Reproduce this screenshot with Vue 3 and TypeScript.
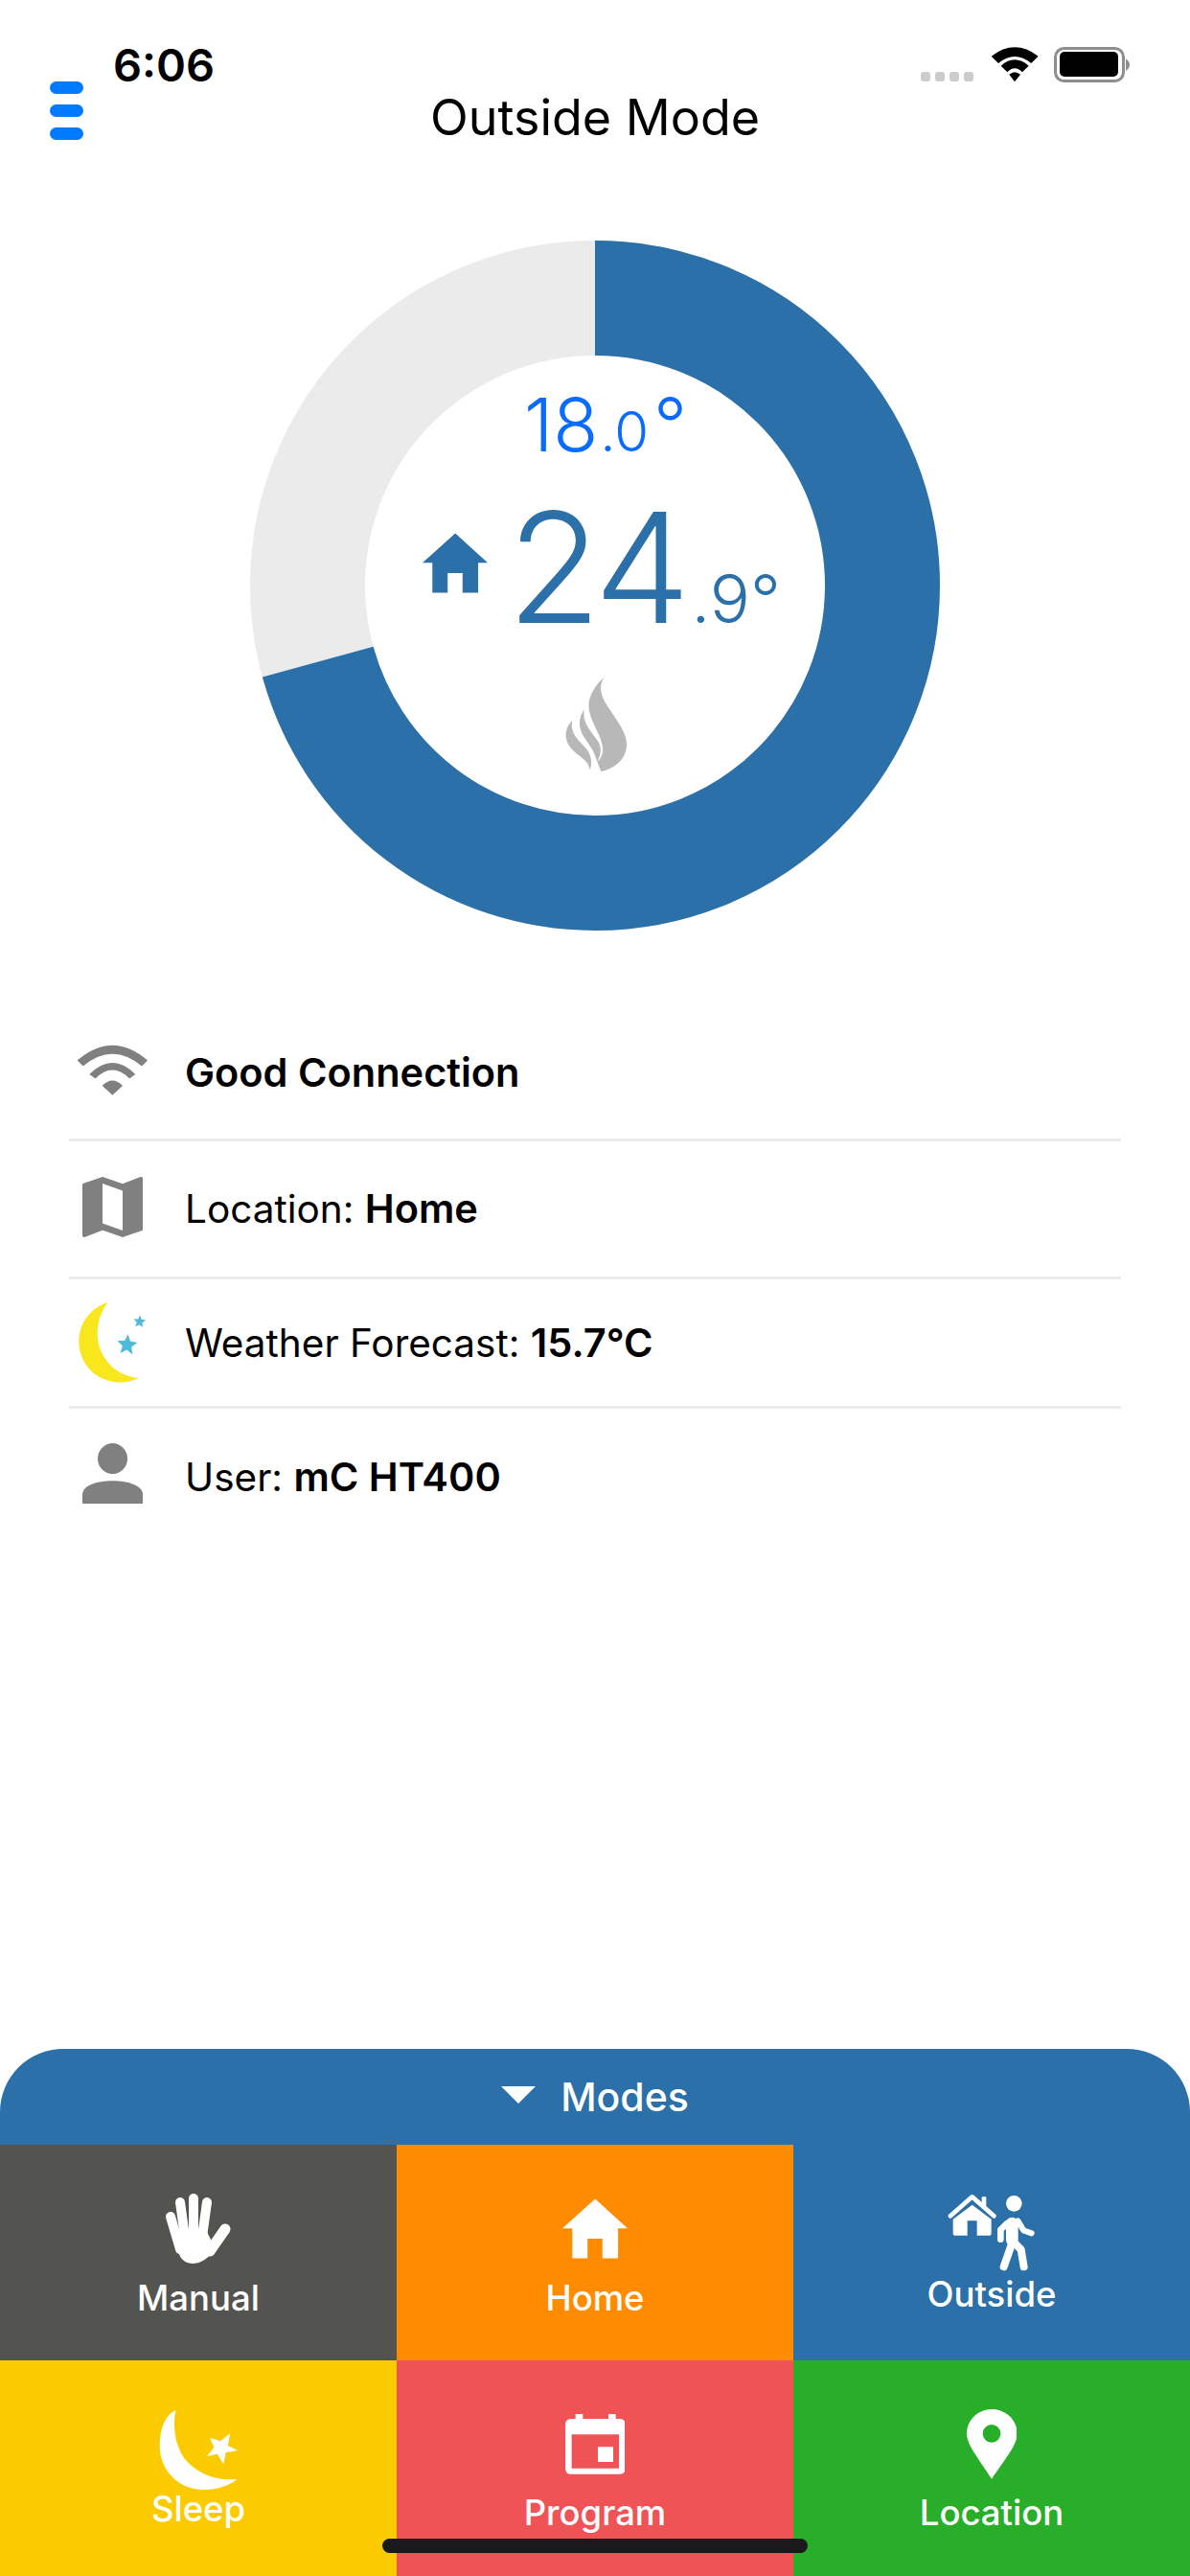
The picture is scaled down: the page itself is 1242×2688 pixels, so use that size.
<script setup lang="ts">
function star(cx: number, cy: number, r: number, rot: number): string {
  const pts: string[] = [];
  for (let i = 0; i < 10; i++) {
    const rad = i % 2 === 0 ? r : r * 0.45;
    const a = ((rot + i * 36 - 90) * Math.PI) / 180;
    pts.push(`${(cx + rad * Math.cos(a)).toFixed(1)},${(cy + rad * Math.sin(a)).toFixed(1)}`);
  }
  return pts.join(" ");
}
const bigStar = star(248, 1030, 33, 5);
const smallStar = star(287, 959, 20, 5);
const circumference = 2 * Math.PI * 300;
const progress = (254.5 / 360) * circumference;
const housePath = "M283 535L385 628H355V722H306V660H259V722H211V628H180Z";
</script>

<template>
  <div class="screen">
    <div class="status">
      <span class="time">6:06</span>
      <div class="status-right">
        <div class="signal"><i></i><i></i><i></i><i></i></div>
        <svg class="s-wifi" viewBox="270 38 156 116">
          <path d="M275 70Q348 14 422 70L400 92Q348 50 297 92Z" />
          <path d="M305 100Q348 62 392 100L372 120Q348 96 325 120Z" />
          <path d="M331 127Q348 112 366 127L348 150Z" />
        </svg>
        <svg class="s-battery" viewBox="0 0 80 37">
          <rect x="1.5" y="1.5" width="71" height="34" rx="9" fill="none" stroke="#8e8e8e" stroke-width="3" />
          <rect x="6" y="5" width="61" height="26" rx="5" fill="#000" />
          <path d="M75 12.5Q79 15 79 18.5T75 25Z" fill="#8e8e8e" />
        </svg>
      </div>
    </div>

    <div class="nav">
      <div class="menu"><i></i><i></i><i></i></div>
      <h1 class="title">Outside Mode</h1>
    </div>

    <div class="donut">
      <svg class="ring" viewBox="0 0 720 720">
        <circle cx="360" cy="360" r="300" fill="none" stroke="#ebebeb" stroke-width="120" />
        <circle
          cx="360" cy="360" r="300" fill="none" stroke="#2b70a9" stroke-width="120"
          :stroke-dasharray="`${progress} ${circumference}`"
          transform="rotate(-90 360 360)"
        />
      </svg>
      <div class="readout">
        <div class="set">
          <span class="set-int">18</span><span class="set-dec">.0</span><span class="set-deg">°</span>
        </div>
        <div class="main">
          <svg class="main-home" viewBox="180 535 205 187"><path :d="housePath" /></svg>
          <span class="main-int">24</span><span class="main-dec">.9°</span>
        </div>
        <svg class="flame" viewBox="630 975 200 305">
          <path d="M755 980C720 1010 700 1050 708 1085C715 1125 745 1160 750 1200C752 1220 745 1235 733 1245L745 1275C790 1265 825 1235 825 1190C825 1150 790 1110 765 1070C745 1040 735 1010 755 980Z" />
          <path d="M692 1080C672 1110 675 1140 690 1165C705 1190 725 1210 732 1245C745 1225 748 1200 735 1180C715 1150 685 1125 692 1080Z" />
          <path d="M655 1115C630 1140 630 1170 645 1195C665 1225 705 1235 710 1270C718 1250 715 1225 700 1205C680 1180 645 1160 655 1115Z" />
        </svg>
      </div>
    </div>

    <ul class="list">
      <li class="row r1">
        <div class="ic">
          <svg class="ic-wifi" viewBox="85 112 230 160" preserveAspectRatio="none">
            <path d="M90 163Q200 71 310 163L292 180Q200 106 108 180Z" />
            <path d="M128 205Q200 135 272 205L253 218Q200 166 147 218Z" />
            <path d="M168 240Q200 208 232 240L200 268Z" />
          </svg>
        </div>
        <span class="txt"><b>Good Connection</b></span>
      </li>
      <li class="row r2">
        <div class="ic">
          <svg class="ic-map" viewBox="3 3 18 18">
            <path d="M15 19L9 16.89V5L15 7.11M20.5 3C20.44 3 20.39 3 20.34 3L15 5.1L9 3L3.36 4.9C3.15 4.97 3 5.15 3 5.38V20.5A.5 .5 0 0 0 3.5 21C3.55 21 3.61 21 3.66 20.97L9 18.9L15 21L20.64 19.1C20.85 19 21 18.85 21 18.62V3.5A.5 .5 0 0 0 20.5 3Z" />
          </svg>
        </div>
        <span class="txt">Location: <b>Home</b></span>
      </li>
      <li class="row r3">
        <div class="ic">
          <svg class="ic-moon" viewBox="90 895 225 255" preserveAspectRatio="none">
            <path fill="#f9e71e" d="M188 900C130 920 97 965 97 1020C97 1090 155 1143 225 1143C248 1143 268 1138 285 1130C215 1125 155 1070 155 995C155 960 168 925 188 900Z" />
            <polygon fill="#4dbbdb" :points="bigStar" />
            <polygon fill="#4dbbdb" :points="smallStar" />
          </svg>
        </div>
        <span class="txt">Weather Forecast: <b>15.7°C</b></span>
      </li>
      <li class="row r4">
        <div class="ic">
          <svg class="ic-user" viewBox="0 0 63 61" preserveAspectRatio="none">
            <circle cx="31.5" cy="15.5" r="15.5" />
            <path d="M0 61V52C0 43 14 38 31.5 38S63 43 63 52V61Z" />
          </svg>
        </div>
        <span class="txt">User: <b>mC HT400</b></span>
      </li>
    </ul>

    <section class="sheet">
      <div class="sheet-head">
        <svg class="caret" viewBox="0 0 36 18"><path d="M0 0H36L18 18Z" /></svg>
        <span>Modes</span>
      </div>
      <div class="tiles">
        <div class="tile t-manual">
          <svg class="i-hand" viewBox="0 0 68 73">
            <g stroke="#fff" stroke-linecap="round" fill="none">
              <path stroke-width="10" d="M5 24L15 58" />
              <path stroke-width="10" d="M15 9L20 45" />
              <path stroke-width="10" d="M29 5V45" />
              <path stroke-width="10" d="M43 9L38 45" />
              <path stroke-width="11" d="M62 37L46 60" />
            </g>
            <path fill="#fff" d="M10 42L42 38L52 58Q40 73 29 73Q16 73 13 60Z" />
          </svg>
          <span class="lbl">Manual</span>
        </div>
        <div class="tile t-home">
          <svg class="i-home" viewBox="180 535 205 187"><path fill="#fff" :d="housePath" /></svg>
          <span class="lbl">Home</span>
        </div>
        <div class="tile t-outside">
          <svg class="i-outside" viewBox="475 505 280 245">
            <path d="M487 575L555 515L623 575" fill="none" stroke="#fff" stroke-width="14" stroke-linecap="round" stroke-linejoin="round" />
            <rect x="585" y="515" width="14" height="30" rx="2" fill="#fff" />
            <path fill="#fff" fill-rule="evenodd" d="M495 585L555 540L615 585V630Q615 636 609 636H501Q495 636 495 630ZM540 590V636H570V590Z" />
            <circle cx="686" cy="536" r="25" fill="#fff" />
            <g fill="none" stroke="#fff" stroke-linecap="round" stroke-linejoin="round">
              <path stroke-width="38" d="M680 598V650" />
              <path stroke-width="20" d="M665 598L644 618V648" />
              <path stroke-width="18" d="M698 590L716 620L741 629" />
              <path stroke-width="24" d="M680 660L654 734" />
              <path stroke-width="24" d="M688 660L708 680L717 734" />
            </g>
          </svg>
          <span class="lbl">Outside</span>
        </div>
        <div class="tile t-sleep">
          <svg class="i-sleep" viewBox="70 30 260 265">
            <path fill="#fff" d="M128 38C95 55 78 95 78 150C78 230 140 288 215 288C260 288 295 275 320 255C250 262 190 235 155 190C125 145 118 90 128 38Z" />
            <polygon fill="#fff" points="235,125 268,136 298,112 292,150 322,165 285,172 278,208 258,176 226,183 248,155" />
          </svg>
          <span class="lbl">Sleep</span>
        </div>
        <div class="tile t-program">
          <svg class="i-cal" viewBox="90 42 188 188">
            <path fill="#fff" fill-rule="evenodd" d="M122 42H145V57H225V42H248V57H260Q278 57 278 75V212Q278 230 260 230H108Q90 230 90 212V75Q90 57 108 57H122ZM110 106V212H258V106ZM192 145H240V192H192Z" />
          </svg>
          <span class="lbl">Program</span>
        </div>
        <div class="tile t-location">
          <svg class="i-pin" viewBox="57 27 158 218">
            <path fill="#fff" fill-rule="evenodd" d="M136 27C93 27 57 60 57 103C57 135 85 170 135 245C187 170 215 135 215 103C215 60 179 27 136 27ZM135 75A28 28 0 1 1 135 131A28 28 0 1 1 135 75Z" />
          </svg>
          <span class="lbl">Location</span>
        </div>
      </div>
    </section>

    <div class="home-bar"></div>
  </div>
</template>

<style scoped>
.screen {
  position: relative;
  width: 1242px;
  height: 2688px;
  overflow: hidden;
  background: #fff;
  display: flex;
  flex-direction: column;
  font-family: Inter, "Liberation Sans", sans-serif;
  color: #000;
}
.status {
  box-sizing: content-box;
  height: 38px;
  padding: 46px 62px 0 118px;
  display: flex;
  justify-content: space-between;
  align-items: flex-start;
}
.time {
  font-size: 47px;
  font-weight: 600;
  line-height: 44px;
}
.status-right {
  display: flex;
  align-items: flex-start;
}
.signal {
  display: flex;
  gap: 5px;
  margin-top: 29px;
  margin-right: 17px;
}
.signal i {
  width: 10px;
  height: 10px;
  border-radius: 3px;
  background: #ccc;
}
.s-wifi {
  width: 52px;
  height: 38.7px;
  margin-top: 2px;
  margin-right: 15px;
}
.s-battery {
  width: 80px;
  height: 37px;
  margin-top: 3px;
}
.nav {
  height: 78px;
  display: grid;
  grid-template-columns: 1fr auto 1fr;
}
.menu {
  display: flex;
  flex-direction: column;
  gap: 11px;
  margin: 1px 0 0 52px;
}
.menu i {
  width: 35px;
  height: 13px;
  border-radius: 7px;
  background: #007aff;
}
.title {
  margin: 0;
  font-size: 52px;
  font-weight: 400;
  line-height: 78px;
}
.donut {
  position: relative;
  width: 720px;
  height: 720px;
  margin: 89px auto 0;
}
.ring {
  display: block;
  width: 720px;
  height: 720px;
}
.readout {
  position: absolute;
  inset: 0;
  display: flex;
  flex-direction: column;
  align-items: center;
  font-weight: 300;
  color: #2b70a9;
}
.set {
  height: 80px;
  margin-top: 152px;
  margin-left: 22px;
  display: flex;
  align-items: baseline;
  color: #0a6cff;
  line-height: 80px;
  font-weight: 350;
}
.set-int {
  font-size: 77px;
}
.set-dec {
  font-size: 58px;
  margin-left: 2px;
}
.set-deg {
  font-size: 77px;
  margin-left: 5px;
}
.main {
  height: 150px;
  margin-top: 34px;
  margin-left: 14px;
  display: flex;
  align-items: baseline;
  line-height: 150px;
}
.main-home {
  width: 68px;
  height: 63px;
  fill: #2b70a9;
  margin-right: 20px;
  align-self: center;
  margin-top: -9px;
}
.main-int {
  font-size: 160px;
  letter-spacing: -5px;
  font-weight: 320;
}
.main-dec {
  font-size: 70px;
  margin-left: 6px;
  font-weight: 340;
}
.flame {
  width: 66.7px;
  height: 101.7px;
  fill: #b8b8b8;
  margin-top: 38px;
  margin-left: 2px;
}
.list {
  list-style: none;
  margin: 79px 72px 0;
  padding: 0;
}
.row {
  display: flex;
  align-items: center;
  border-bottom: 3px solid #ebebeb;
}
.row.r1 { height: 138px; }
.row.r2 { height: 141px; }
.row.r3 { height: 132px; }
.row.r4 { height: 142px; border-bottom: 0; }
.ic {
  width: 90px;
  margin-right: 31px;
  display: flex;
  justify-content: center;
  fill: #808080;
}
.ic-wifi { width: 76.7px; height: 55px; margin-top: -6px; }
.ic-map { width: 63px; height: 63px; margin-top: -4px; }
.ic-moon { width: 75px; height: 87.8px; }
.ic-user { width: 63px; height: 63px; margin-top: -8px; }
.txt {
  font-size: 40.5px;
  line-height: 50px;
  font-weight: 400;
}
.txt b {
  font-size: 41.5px;
  font-weight: 600;
}
.sheet {
  margin-top: auto;
}
.sheet-head {
  height: 100px;
  background: #2b70a9;
  border-radius: 66px 66px 0 0;
  display: flex;
  justify-content: center;
  align-items: center;
  gap: 26px;
  color: #fff;
  font-size: 41px;
  font-weight: 500;
}
.caret {
  width: 36px;
  height: 18px;
  fill: #fff;
  margin-top: -4px;
}
.tiles {
  display: grid;
  grid-template-columns: repeat(3, 414px);
  grid-auto-rows: 225px;
}
.tile {
  display: flex;
  flex-direction: column;
  align-items: center;
  color: #fff;
}
.lbl {
  font-size: 36.5px;
  font-weight: 500;
  line-height: 44px;
}
.t-manual { background: #53544f; padding-top: 51px; }
.t-manual .lbl { margin-top: 14px; }
.t-home { background: #ff8c00; padding-top: 56px; }
.t-home .lbl { margin-top: 19px; }
.t-outside { background: #2b70a9; padding-top: 51px; }
.t-outside .lbl { margin-top: 1px; }
.t-sleep { background: #fbcb00; padding-top: 49px; }
.t-sleep .lbl { margin-top: -4px; }
.t-program { background: #f05355; padding-top: 56px; }
.t-program .lbl { margin-top: 18px; }
.t-location { background: #28ae28; padding-top: 51px; }
.t-location .lbl { margin-top: 13px; }
.i-hand { width: 68px; height: 73px; }
.i-home { width: 68px; height: 63px; }
.i-outside { width: 93.3px; height: 81.7px; }
.i-sleep { width: 86.7px; height: 88.3px; }
.i-cal { width: 62.7px; height: 62.7px; }
.i-pin { width: 52.7px; height: 72.7px; }
.home-bar {
  position: absolute;
  left: 399px;
  top: 2649px;
  width: 444px;
  height: 15px;
  border-radius: 8px;
  background: #1a1a1a;
}
</style>
